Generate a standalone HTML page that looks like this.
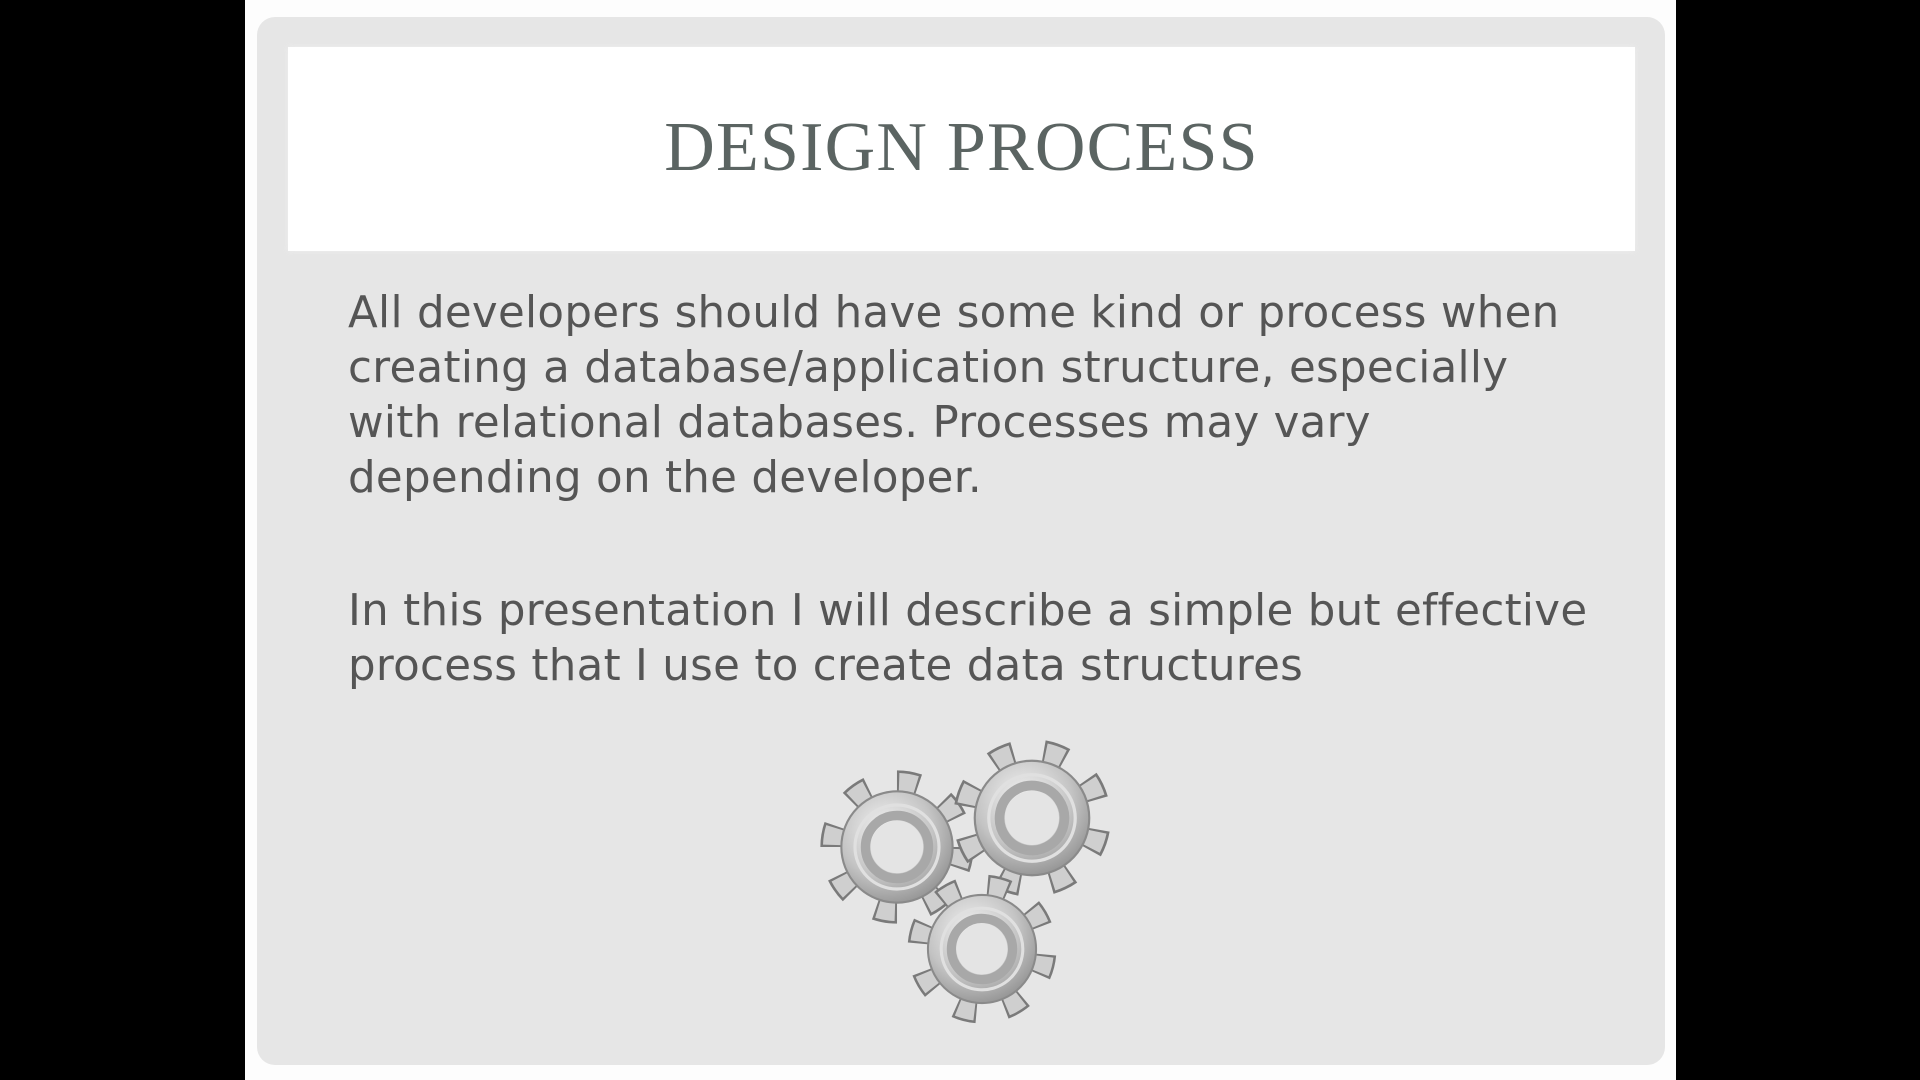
<!DOCTYPE html>
<html><head><meta charset="utf-8"><style>
body{margin:0;width:1920px;height:1080px;background:#000;position:relative;overflow:hidden}
#slide{position:absolute;left:245px;top:0;width:1431px;height:1080px;background:#fdfdfd}
#panel{position:absolute;left:257px;top:17px;width:1408px;height:1048px;background:#e6e6e6;border-radius:18px}
#title{position:absolute;left:288px;top:47px;width:1347px;height:204px;background:#fff;box-shadow:0 0 6px #eee}
#title div{position:absolute;width:100%;top:101px;line-height:0;text-align:center;font-family:"Liberation Serif",serif;font-size:70px;color:#5b6462;letter-spacing:1.2px}
.b{position:absolute;left:348px;font-family:"DejaVu Sans",sans-serif;font-size:43.5px;color:#555;line-height:55px;font-weight:normal;white-space:nowrap;letter-spacing:0.3px}
</style></head><body>
<div id="slide"></div>
<div id="panel"></div>
<div id="title"><div>DESIGN PROCESS</div></div>
<div class="b" style="top:286px">All developers should have some kind or process when<br>creating a database/application structure, especially<br>with relational databases. Processes may vary<br>depending on the developer.</div>
<div class="b" style="top:584px">In this presentation I will describe a simple but effective<br>process that I use to create data structures</div>
<svg style="position:absolute;left:0;top:0" width="1920" height="1080">
<defs>
<radialGradient id="g" cx="40%" cy="35%" r="70%"><stop offset="0" stop-color="#f4f4f4"/><stop offset="0.6" stop-color="#c4c4c4"/><stop offset="1" stop-color="#929292"/></radialGradient>
<g id="gear">
<circle r="60" fill="none" stroke="#7a7a7a" stroke-width="26" stroke-dasharray="20 27.1"/>
<circle r="60" fill="none" stroke="#cfcfcf" stroke-width="21" stroke-dasharray="16 31.1" stroke-dashoffset="-2"/>
<circle r="53" fill="url(#g)" stroke="#8a8a8a" stroke-width="2"/>
<circle r="40" fill="none" stroke="#e0e0e0" stroke-width="3"/>
<circle r="30" fill="none" stroke="#a8a8a8" stroke-width="9"/>
<circle r="25" fill="#e4e4e4"/>
</g>
</defs>
<use href="#gear" transform="translate(897,847) scale(1.05)"/>
<use href="#gear" transform="translate(1032,818) scale(1.08) rotate(10)"/>
<use href="#gear" transform="translate(982,949) scale(1.02) rotate(5)"/>
</svg>
</body></html>
